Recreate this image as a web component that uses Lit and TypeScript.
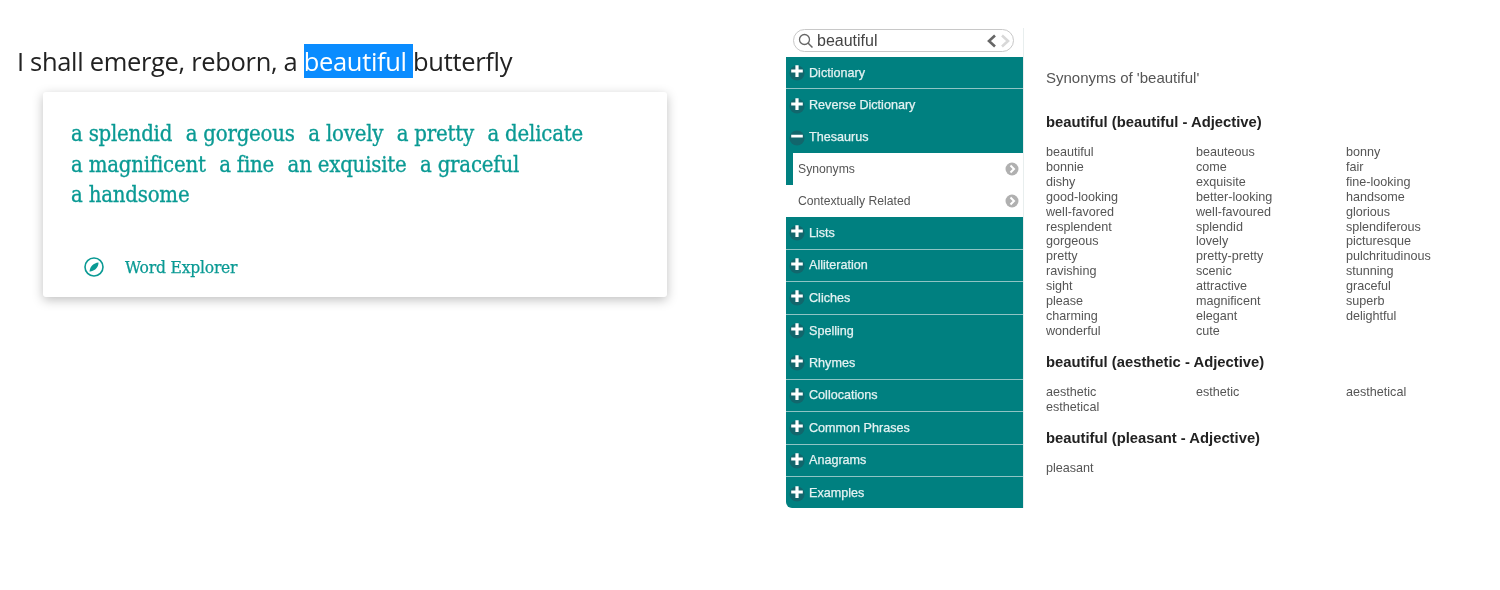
import { LitElement, html, css } from 'lit';
import { customElement } from 'lit/decorators.js';

const suggestions = [
  ['a splendid', 'a gorgeous', 'a lovely', 'a pretty', 'a delicate'],
  ['a magnificent', 'a fine', 'an exquisite', 'a graceful'],
  ['a handsome'],
];

const before = ['Dictionary'];
const after = [
  'Lists',
  'Alliteration',
  'Cliches',
  'Spelling',
  'Rhymes',
  'Collocations',
  'Common Phrases',
  'Anagrams',
  'Examples',
];

const groups = [
  {
    title: 'beautiful (beautiful - Adjective)',
    words: [
      'beautiful', 'beauteous', 'bonny',
      'bonnie', 'come', 'fair',
      'dishy', 'exquisite', 'fine-looking',
      'good-looking', 'better-looking', 'handsome',
      'well-favored', 'well-favoured', 'glorious',
      'resplendent', 'splendid', 'splendiferous',
      'gorgeous', 'lovely', 'picturesque',
      'pretty', 'pretty-pretty', 'pulchritudinous',
      'ravishing', 'scenic', 'stunning',
      'sight', 'attractive', 'graceful',
      'please', 'magnificent', 'superb',
      'charming', 'elegant', 'delightful',
      'wonderful', 'cute',
    ],
  },
  {
    title: 'beautiful (aesthetic - Adjective)',
    words: ['aesthetic', 'esthetic', 'aesthetical', 'esthetical'],
  },
  {
    title: 'beautiful (pleasant - Adjective)',
    words: ['pleasant'],
  },
];

@customElement('app-root')
export class AppRoot extends LitElement {
  static styles = css`
    * {
      box-sizing: border-box;
      margin: 0;
      padding: 0;
    }

    :host {
      display: flex;
      width: 1500px;
      height: 590px;
      background: #fff;
      overflow: hidden;
      filter: blur(0.4px);
    }

    .left {
      width: 786px;
      padding: 43.5px 0 0 17px;
    }

    .sentence {
      font: 25.5px/35px 'Open Sans', sans-serif;
      letter-spacing: -0.32px;
      color: #222;
      white-space: pre;
    }

    .sentence mark {
      background: #0a8cff;
      color: #fff;
    }

    .card {
      width: 624px;
      height: 204.5px;
      margin: 13.5px 0 0 26px;
      padding: 26.5px 28px 0;
      background: #fff;
      border-radius: 3px;
      box-shadow: 0 3px 11px rgba(0, 0, 0, 0.25);
      display: flex;
      flex-direction: column;
    }

    .line {
      display: flex;
      gap: 13.5px;
      height: 30.4px;
      align-items: center;
      font: 22px 'DejaVu Serif Condensed', 'DejaVu Serif', serif;
      letter-spacing: -0.22px;
      -webkit-text-stroke: 0.3px #0a9a94;
      color: #0a9a94;
      white-space: nowrap;
    }

    .explorer {
      display: flex;
      align-items: center;
      gap: 21px;
      margin: 47.5px 0 0 13px;
      font: 17.3px 'DejaVu Serif Condensed', 'DejaVu Serif', serif;
      letter-spacing: -0.2px;
      -webkit-text-stroke: 0.25px #0a9a94;
      color: #0a9a94;
    }

    .side {
      width: 238px;
      margin-top: 28px;
      height: 480px;
      border-right: 1px solid #e8eeee;
      font-family: 'Liberation Sans', sans-serif;
      display: flex;
      flex-direction: column;
    }

    .search {
      height: 23px;
      margin: 1px 9px 5px 7px;
      padding: 0 0 0 4px;
      border: 1px solid #c8c8c8;
      border-radius: 12px;
      display: flex;
      align-items: center;
      gap: 3px;
      font-size: 16px;
      color: #444;
      flex: none;
    }

    .search span {
      flex: 1;
    }

    .menu {
      flex: 1;
      background: #008080;
      border-radius: 0 0 0 6px;
      overflow: hidden;
    }

    .row {
      height: 32.5px;
      display: flex;
      align-items: center;
      padding-left: 3px;
      gap: 4px;
      color: #e4f2f2;
      font-size: 12.6px;
      -webkit-text-stroke: 0.25px #e4f2f2;
      border-bottom: 1px solid #8fc4c4;
    }

    .row.flat {
      border-bottom: none;
    }

    .row.top {
      height: 32px;
    }

    .sign {
      width: 16px;
      height: 17px;
      flex: none;
      display: block;
    }

    .sub {
      height: 32px;
      display: flex;
      align-items: center;
      justify-content: space-between;
      padding: 0 4px 0 12px;
      font-size: 12.2px;
      color: #555;
      background: #fff;
    }

    .sub.active {
      padding-left: 5px;
      border-left: 7px solid #008080;
    }

    .main {
      flex: 1;
      padding: 70px 0 0 22px;
      font-family: 'Liberation Sans', sans-serif;
    }

    .caption {
      font-size: 15px;
      line-height: 16px;
      color: #555;
      margin-bottom: 28px;
    }

    h2 {
      font-size: 14.8px;
      line-height: 16px;
      font-weight: 700;
      color: #222;
      margin-bottom: 15px;
    }

    .words {
      display: grid;
      grid-template-columns: repeat(3, 150px);
      font-size: 12.6px;
      line-height: 14.9px;
      color: #555;
      margin-bottom: 15px;
    }
  `;

  private sign(minus = false) {
    return html`<svg class="sign" viewBox="0 0 16 17">
      <circle cx="8" cy="9" r="7.6" fill="#12666c"></circle>
      <path d=${minus ? 'M2.200 5.800h11.600v2.800H2.200z' : 'M6.400 1.200H9.600V5.600H13.800V8.600H9.600V13H6.400V8.600H2.200V5.600H6.400z'} fill="#fff"></path>
    </svg>`;
  }

  private arrow() {
    return html`<svg width="14" height="14" viewBox="0 0 14 14">
      <circle cx="7" cy="7" r="6.500" fill="#b0b0b0"></circle>
      <path d="M5.500 3.500 9 7l-3.500 3.500" fill="none" stroke="#fff" stroke-width="2"></path>
    </svg>`;
  }

  private row(label: string, minus = false, flat = false, top = false) {
    return html`<div class="row ${flat ? 'flat' : ''} ${top ? 'top' : ''}">${this.sign(minus)}<span>${label}</span></div>`;
  }

  render() {
    return html`
      <section class="left">
        <p class="sentence">I shall emerge, reborn, a <mark>beautiful </mark>butterfly</p>
        <div class="card">
          ${suggestions.map(
            line => html`<div class="line">${line.map(s => html`<span>${s}</span>`)}</div>`
          )}
          <div class="explorer">
            <svg width="20" height="20" viewBox="0 0 20 20">
              <circle cx="10" cy="10" r="9" fill="none" stroke="#0a9a94" stroke-width="1.600"></circle>
              <path d="M14.500 5.500C14.500 10 11.500 13.500 6.400 14.600L5.500 14.500C6 9.500 9.500 6 14.500 5.500z" fill="#0a9a94"></path>
            </svg>
            <span>Word Explorer</span>
          </div>
        </div>
      </section>

      <nav class="side">
        <div class="search">
          <svg width="16" height="16" viewBox="0 0 16 16">
            <circle cx="6.500" cy="6.500" r="5" fill="none" stroke="#666" stroke-width="1.300"></circle>
            <path d="M10 10l4.500 4.500" stroke="#666" stroke-width="1.500"></path>
          </svg>
          <span>beautiful</span>
          <svg width="28" height="16" viewBox="0 0 28 16">
            <path d="M10 2.500 4 8l6 5.500" fill="none" stroke="#666" stroke-width="2.600"></path>
            <path d="M17 2.500 23 8l-6 5.500" fill="none" stroke="#d8d8d8" stroke-width="2.600"></path>
          </svg>
        </div>
        <div class="menu">
          ${before.map(label => this.row(label, false, false, true))}
          ${this.row('Reverse Dictionary', false, true, true)}
          ${this.row('Thesaurus', true, true, true)}
          <div class="sub active">Synonyms ${this.arrow()}</div>
          <div class="sub">Contextually Related ${this.arrow()}</div>
          ${after.map(label => this.row(label, false, label === 'Spelling' || label === 'Examples'))}
        </div>
      </nav>

      <main class="main">
        <p class="caption">Synonyms of 'beautiful'</p>
        ${groups.map(
          group => html`
            <h2>${group.title}</h2>
            <div class="words">${group.words.map(w => html`<span>${w}</span>`)}</div>
          `
        )}
      </main>
    `;
  }
}
